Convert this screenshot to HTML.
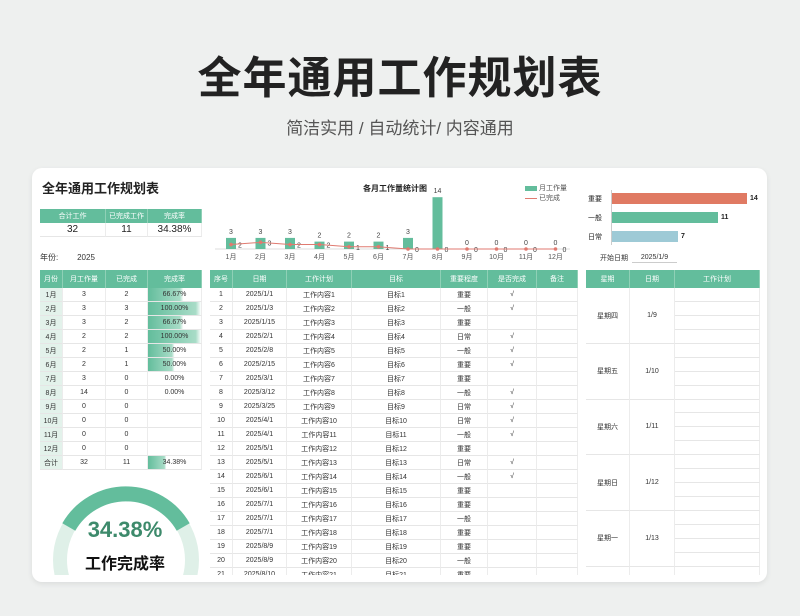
<!DOCTYPE html>
<html><head><meta charset="utf-8"><style>
*{margin:0;padding:0;box-sizing:border-box}
body{width:800px;height:616px;background:#eef0ef;font-family:"Liberation Sans","Noto Sans CJK SC",sans-serif;position:relative;overflow:hidden;color:#333}
.a{position:absolute}
#card{position:absolute;left:32px;top:168px;width:735px;height:414px;background:#fff;border-radius:10px;box-shadow:0 2px 6px rgba(0,0,0,.08)}
#x{position:absolute;left:0;top:0;width:800px;height:575px;overflow:hidden}
.c{position:absolute;display:flex;align-items:center;justify-content:center;font-size:7px;white-space:nowrap}
.h{background:#63bd9c;color:#fff;border-right:1px solid #8fd0b6}
.b{border-bottom:1px solid #e6e6e6;border-right:1px solid #ececec}
</style></head><body>
<div class="a" style="left:0;width:800px;top:42px;text-align:center;font-size:44px;font-weight:bold;color:#222;letter-spacing:1px">全年通用工作规划表</div>
<div class="a" style="left:0;width:800px;top:114px;text-align:center;font-size:17px;color:#555">简洁实用 / 自动统计/ 内容通用</div>
<div id="card"></div>
<div id="x"></div>
<script>
var o='';
function c(x,y,w,h,t,cls,st){o+='<div class="c '+(cls||'')+'" style="left:'+x+'px;top:'+y+'px;width:'+w+'px;height:'+h+'px;'+(st||'')+'">'+t+'</div>';}
c(42,180,130,14,'全年通用工作规划表','','font-size:13px;font-weight:bold;color:#222;justify-content:flex-start');
var sx=[40,106,148,202];var sh=['合计工作','已完成工作','完成率'],sv=['32','11','34.38%'];
for(var i=0;i<3;i++){c(sx[i],209,sx[i+1]-sx[i],14,sh[i],'h');c(sx[i],223,sx[i+1]-sx[i],14,sv[i],'b','font-size:10px;color:#222');}
c(40,251,40,13,'年份:','','font-size:8px;justify-content:flex-start');c(76,251,20,13,'2025','','font-size:8px');
var mx=[40,63,106,148,202];var mh=['月份','月工作量','已完成','完成率'];
for(i=0;i<4;i++)c(mx[i],270,mx[i+1]-mx[i],18,mh[i],'h');
var mw=[3,3,3,2,2,2,3,14,0,0,0,0],md=[2,3,2,2,1,1,0,0,0,0,0,0],mr=['66.67%','100.00%','66.67%','100.00%','50.00%','50.00%','0.00%','0.00%','','','',''];
for(i=0;i<13;i++){var y=288+i*14;var last=i==12;
c(40,y,23,14,last?'合计':(i+1)+'月','b','background:#e3f2eb');
c(63,y,43,14,last?32:mw[i],'b');c(106,y,42,14,last?11:md[i],'b');
var r=last?'34.38%':mr[i];var p=last?0.3438:(mw[i]?md[i]/mw[i]:0);
c(148,y,54,14,r,'b',p?'background:linear-gradient(90deg,#63bd9c 0%,#a8dcc7 '+(p*100*0.9)+'%,#fff '+(p*100)+'%)':'');}
o+='<svg class="a" style="left:0;top:0" width="260" height="616"><circle cx="126" cy="560" r="66" fill="none" stroke="#dff0e8" stroke-width="14"/><path d="M68.8 527 A66 66 0 0 1 183.2 527" fill="none" stroke="#63bd9c" stroke-width="15"/></svg>';
c(60,516,130,28,'34.38%','','font-size:22px;font-weight:bold;color:#3d8a6b');
c(60,550,130,24,'工作完成率','','font-size:16px;font-weight:bold;color:#111');
c(360,182,70,12,'各月工作量统计图','','font-size:8px;font-weight:bold;color:#222');
o+='<div class="a" style="left:525px;top:186px;width:12px;height:5px;background:#63bd9c"></div>';c(539,183,40,10,'月工作量','','font-size:7px;justify-content:flex-start;color:#555');
o+='<div class="a" style="left:525px;top:198px;width:12px;height:1px;background:#e07a70"></div>';c(539,193,40,10,'已完成','','font-size:7px;justify-content:flex-start;color:#555');
var svg='<svg class="a" style="left:215px;top:180px" width="360" height="75">';
svg+='<line x1="0" y1="69" x2="355" y2="69" stroke="#ddd"/>';var pts=[];
for(i=0;i<12;i++){var cx=16+i*29.5;var h=mw[i]*3.7;if(h)svg+='<rect x="'+(cx-5)+'" y="'+(69-h)+'" width="10" height="'+h+'" fill="#63bd9c"/>';
svg+='<text x="'+cx+'" y="'+(69-h-4)+'" font-size="7" text-anchor="middle" fill="#444">'+mw[i]+'</text>';
var ly=69-md[i]*3.7*0.6;pts.push(cx+','+ly);svg+='<text x="'+(cx+7)+'" y="'+(ly+3)+'" font-size="7" fill="#444">'+md[i]+'</text>';}
svg+='<polyline points="'+pts.join(' ')+'" fill="none" stroke="#e07a70" stroke-width="1"/>';
pts.forEach(function(p){var q=p.split(',');svg+='<circle cx="'+q[0]+'" cy="'+q[1]+'" r="1.8" fill="#e07a70"/>';});
svg+='</svg>';o+=svg;
for(i=0;i<12;i++)c(216+i*29.5,252,30,10,(i+1)+'月','','color:#555');
var rb=[['重要',747,'#e07a63',14],['一般',718,'#63bd9c',11],['日常',678,'#9ecad6',7]];
o+='<div class="a" style="left:611px;top:190px;width:1px;height:55px;background:#ccc"></div>';
rb.forEach(function(b,k){var y=193+k*19;c(588,y,24,11,b[0],'','color:#222;justify-content:flex-start');o+='<div class="a" style="left:612px;top:'+y+'px;width:'+(b[1]-612)+'px;height:11px;background:'+b[2]+'"></div>';c(b[1]+3,y,14,11,b[3],'','font-weight:bold;color:#222;justify-content:flex-start');});
c(594,252,40,11,'开始日期','','color:#333');c(632,252,45,11,'2025/1/9','','color:#333;border-bottom:1px solid #ccc');
var tx=[210,233,287,352,441,488,537,578];var th=['序号','日期','工作计划','目标','重要程度','是否完成','备注'];
for(i=0;i<7;i++)c(tx[i],270,tx[i+1]-tx[i],18,th[i],'h');
var dates=['2025/1/1','2025/1/3','2025/1/15','2025/2/1','2025/2/8','2025/2/15','2025/3/1','2025/3/12','2025/3/25','2025/4/1','2025/4/1','2025/5/1','2025/5/1','2025/6/1','2025/6/1','2025/7/1','2025/7/1','2025/7/1','2025/8/9','2025/8/9','2025/8/10'];
var imp=['重要','一般','重要','日常','一般','重要','重要','一般','日常','日常','一般','重要','日常','一般','重要','重要','一般','重要','重要','一般','重要'];
var done=[1,1,0,1,1,1,0,1,1,1,1,0,1,1,0,0,0,0,0,0,0];
for(i=0;i<21;i++){var y=288+i*14;var v=[i+1,dates[i],'工作内容'+(i+1),'目标'+(i+1),imp[i],done[i]?'√':'',''];
for(var j=0;j<7;j++)c(tx[j],y,tx[j+1]-tx[j],14,v[j],'b');}
var rx=[586,630,675,760];var rh=['星期','日期','工作计划'];
for(i=0;i<3;i++)c(rx[i],270,rx[i+1]-rx[i],18,rh[i],'h');
var wk=['星期四','星期五','星期六','星期日','星期一','星期二'],dd=['1/9','1/10','1/11','1/12','1/13','1/14'];
for(i=0;i<6;i++){var y=288+i*55.7;c(586,y,44,56,wk[i],'b');c(630,y,45,56,dd[i],'b');for(j=0;j<4;j++)c(675,y+j*14,85,14,'','b');}
document.getElementById('x').innerHTML=o;
</script>
</body></html>
